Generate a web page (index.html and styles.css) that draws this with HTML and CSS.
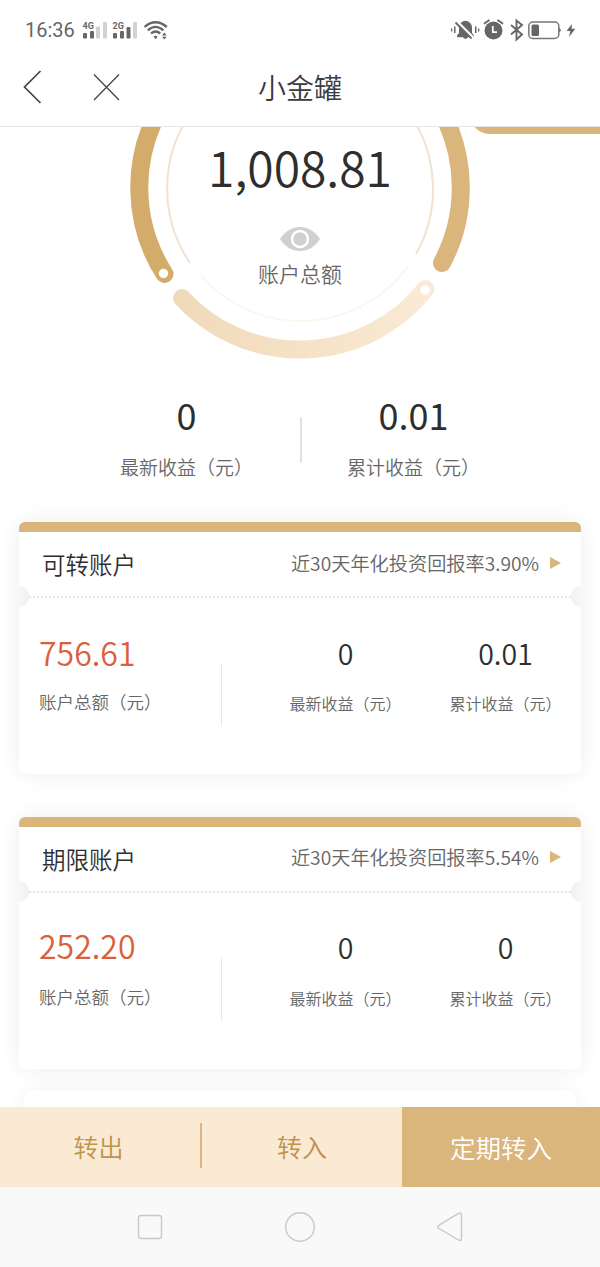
FILE: index.html
```
<!DOCTYPE html>
<html lang="zh-CN">
<head>
  <meta charset="utf-8">
  <title>小金罐</title>
  <link rel="stylesheet" href="styles.css">
</head>
<body>
<div class="page">
  <!-- 状态栏 -->
  <div class="status-bar">
    <span class="time">16:36</span>
    <svg class="signal" width="90" height="24" viewBox="0 0 90 24">
      <g fill="#666">
        <text x="1.5" y="11" class="net">4G</text>
        <rect x="2" y="15" width="4" height="5.5" rx="1"/>
        <rect x="9" y="13" width="4" height="7.5" rx="1"/>
        <text x="31.5" y="11" class="net">2G</text>
        <rect x="32" y="15" width="4" height="5.5" rx="1"/>
        <rect x="39" y="13" width="4" height="7.5" rx="1"/>
        <rect x="45.5" y="9" width="4" height="11.5" rx="1"/>
      </g>
      <g fill="#d2d2d2">
        <rect x="15" y="8.5" width="4" height="12" rx="1"/>
        <rect x="22" y="4" width="4" height="16.5" rx="1"/>
        <rect x="52" y="4" width="4" height="16.5" rx="1"/>
      </g>
      <g fill="none" stroke="#666" stroke-width="2.3">
        <path d="M63.500 9Q74.500 -0.500 85.800 9"/>
        <path d="M66.800 12.300Q74.500 5.500 82.300 12.300"/>
        <path d="M70 15.500Q74.500 11.500 79.200 15.500"/>
      </g>
      <path d="M72.500 18.500Q74.500 17 76.700 18.500L74.500 21.200ZM81 17.500L83.300 14.500L85.700 17.500ZM81 18.800L83.300 21.500L85.700 18.800Z" fill="#666"/>
    </svg>
    <svg class="sys" width="130" height="24" viewBox="0 0 130 24">
      <!-- 静音 -->
      <g fill="#666">
        <path d="M7 19.200V17.500L9 15V9.500C9 6 11.500 3.300 15.500 2.800C19.500 3.300 22 6 22 9.500V15L24 17.500V19.200H18Q15.500 22.800 13 19.200Z"/>
        <rect x="1" y="10.500" width="1.300" height="3"/><rect x="4" y="8.500" width="1.500" height="6.500"/>
        <rect x="25" y="8.500" width="1.500" height="6.500"/><rect x="28" y="10.500" width="1.300" height="3"/>
      </g>
      <path d="M7 3.500L23.500 20" stroke="#fff" stroke-width="2.500"/>
      <path d="M5.500 4.500L21.500 20.500" stroke="#666" stroke-width="1.800"/>
      <!-- 闹钟 -->
      <circle cx="43.500" cy="12.500" r="9" fill="#666"/>
      <path d="M34 5.800L39.500 2M47.500 2L53 5.800" stroke="#666" stroke-width="2"/>
      <path d="M42.800 8V14.200H47" stroke="#fff" stroke-width="1.700" fill="none"/>
      <!-- 蓝牙 -->
      <path d="M61 7L72 16.500L66.500 21.500V2.500L72 7L61 16.500" fill="none" stroke="#666" stroke-width="1.900"/>
      <!-- 电池 -->
      <rect x="78.800" y="4" width="30" height="16.500" rx="4" fill="none" stroke="#777" stroke-width="1.500"/>
      <rect x="81.500" y="6.500" width="7.500" height="11.500" rx="1.500" fill="#666"/>
      <path d="M109.500 10.500L110.500 12.300L109.500 14Z" fill="#777" stroke="#777"/>
      <path d="M122 6L116.500 13H120.300L119 19L125.300 10.800H121.500Z" fill="#666"/>
    </svg>
  </div>

  <!-- 标题栏 -->
  <div class="header">
    <div class="left">
      <svg width="110" height="40" viewBox="0 0 110 40" fill="none" stroke="#444">
        <path d="M25.500 4L9.500 20L25.500 36" stroke-width="1.700"/>
        <path d="M79 7.500L104 33M104 7.500L79 33" stroke-width="1.300"/>
      </svg>
    </div>
    <h1>小金罐</h1>
    <div class="right"></div>
  </div>

  <div class="content">
    <div class="tag"></div>
    <!-- 总额圆环 -->
    <div class="total">
      <svg class="ring" width="360" height="245" viewBox="120 127 360 245" fill="none">
        <defs>
          <linearGradient id="light" x1="174" y1="0" x2="434" y2="0" gradientUnits="userSpaceOnUse">
            <stop offset="0" stop-color="#f0d9b8"/>
            <stop offset="1" stop-color="#faebd6"/>
          </linearGradient>
        </defs>
        <g stroke-width="18" stroke-linecap="round">
          <path d="M161 107A160.500 160.500 0 0 0 164.500 274" stroke="#d3ab6b"/>
          <path d="M439 107A160.500 160.500 0 0 1 442 263" stroke="#dab57c"/>
          <path d="M182 298A160.500 160.500 0 0 0 425.500 289" stroke="url(#light)"/>
        </g>
        <path d="M190 263A133 133 0 0 1 190 114" stroke="#f0e3d0" stroke-width="2"/>
        <path d="M416 254A133 133 0 0 0 410 114" stroke="#f0e3d0" stroke-width="2"/>
        <path d="M201 276A133 133 0 0 0 409 265" stroke="#fcf5ea" stroke-width="1.500"/>
        <circle cx="163.500" cy="273.500" r="4.700" fill="#fff"/>
        <circle cx="425" cy="290" r="4.700" fill="#fff"/>
      </svg>
      <div class="total-text">
        <div class="total-num">1,008.81</div>
        <svg class="eye" width="40" height="24" viewBox="0 0 40 24">
          <path d="M0 12C5 4 12 0 20 0S35 4 40 12C35 20 28 24 20 24S5 20 0 12Z" fill="#d0d0d0"/>
          <circle cx="20" cy="12" r="8" fill="#d0d0d0" stroke="#fff" stroke-width="2.500"/>
        </svg>
        <div class="total-label">账户总额</div>
      </div>
    </div>

    <div class="income">
      <div class="income-item">
        <b>0</b>
        <span>最新收益（元）</span>
      </div>
      <div class="income-line"></div>
      <div class="income-item">
        <b>0.01</b>
        <span>累计收益（元）</span>
      </div>
    </div>

    <div class="card">
      <div class="card-head">
        <h2>可转账户</h2>
        <span class="rate">近30天年化投资回报率3.90%</span>
        <i class="arrow"></i>
      </div>
      <div class="card-body">
        <div class="main">
          <b>756.61</b>
          <span>账户总额（元）</span>
        </div>
        <div class="sub">
          <b>0</b>
          <span>最新收益（元）</span>
        </div>
        <div class="sub">
          <b>0.01</b>
          <span>累计收益（元）</span>
        </div>
      </div>
    </div>

    <div class="card term">
      <div class="card-head">
        <h2>期限账户</h2>
        <span class="rate">近30天年化投资回报率5.54%</span>
        <i class="arrow"></i>
      </div>
      <div class="card-body">
        <div class="main">
          <b>252.20</b>
          <span>账户总额（元）</span>
        </div>
        <div class="sub">
          <b>0</b>
          <span>最新收益（元）</span>
        </div>
        <div class="sub">
          <b>0</b>
          <span>累计收益（元）</span>
        </div>
      </div>
    </div>

    <div class="next-card"></div>
  </div>

  <!-- 底部按钮 -->
  <div class="buttons">
    <a class="btn out">转出</a>
    <a class="btn in">转入</a>
    <a class="btn fixed">定期转入</a>
  </div>

  <!-- 系统导航 -->
  <div class="nav">
    <svg width="330" height="32" viewBox="0 0 330 32" fill="none" stroke="#c8c8c8" stroke-width="1.400">
      <rect x="3.500" y="4.500" width="23" height="23" rx="2.500"/>
      <circle cx="165" cy="16" r="14.300"/>
      <path d="M304 14.200L323.500 2.500Q326.500 1.300 326.500 4V27.500Q326.500 30.500 323.500 29L304 17.500Q301.500 16 304 14.200Z"/>
    </svg>
  </div>
</div>
</body>
</html>
```
FILE: styles.css
```
* {
  box-sizing: border-box;
  margin: 0;
  padding: 0;
}

body {
  background-color: #fff;
  font-family: "Noto Sans CJK SC", sans-serif;
  font-weight: 350;
  color: #2e2e2e;
}

svg {
  display: block;
}

b, h1, h2 {
  font-weight: 350;
}

.page {
  display: flex;
  flex-direction: column;
  width: 600px;
  height: 1267px;
  overflow: hidden;
}

/* 状态栏 */
.status-bar {
  display: flex;
  align-items: center;
  height: 60px;
  padding: 0 20px 0 25px;
}

.time {
  width: 56px;
  font-family: Roboto, sans-serif;
  font-size: 20px;
  font-weight: 400;
  color: #666;
}

.net {
  font: bold 9px Roboto, sans-serif;
}

.signal {
  margin-top: -1px;
}

.sys {
  margin-left: auto;
}

/* 标题栏 */
.header {
  display: flex;
  align-items: center;
  height: 67px;
  padding: 0 15px 13px;
  border-bottom: 1px solid #e6e6e6;
}

.header .left,
.header .right {
  flex: 1;
}

.header h1 {
  font-size: 28px;
  line-height: 40px;
  color: #3a3a42;
}

.content {
  position: relative;
  height: 980px;
  overflow: hidden;
}

.tag {
  position: absolute;
  right: 0;
  top: -33px;
  width: 130px;
  height: 40px;
  background-color: #dab57c;
  border-radius: 22px 0 0 22px;
}

.total {
  position: relative;
  height: 245px;
}

.ring {
  margin: 0 auto;
}

.total-text {
  position: absolute; /* 盖在圆环上 */
  top: 0;
  left: 0;
  width: 100%;
  text-align: center;
}

.total-num {
  height: 100px;
  font-size: 48px;
  line-height: 79px;
}

.eye {
  margin: 0 auto;
}

.total-label {
  margin-top: 7px;
  font-size: 21px;
  line-height: 30px;
  color: #666;
}

.income {
  display: flex;
  justify-content: center;
  height: 150px;
  padding-top: 18px;
}

.income-item {
  width: 227px;
  text-align: center;
}

.income-item b {
  display: block;
  font-size: 36px;
  line-height: 48px;
  font-weight: 400;
}

.income-item span {
  display: block;
  margin-top: 16px;
  font-size: 19px;
  line-height: 26px;
  color: #666;
}

.income-line {
  width: 2px;
  height: 46px;
  margin: 27px -2px 0 0;
  background-color: #e2e2e2;
}

/* 账户卡片 */
.card {
  position: relative;
  width: 562px;
  height: 252px;
  margin: 0 auto 43px;
  border-top: 10px solid #dab57c;
  border-radius: 6px;
  background-color: #fff;
  box-shadow: 0 0 22px rgba(0, 0, 0, 0.07);
}

.card-head {
  display: flex;
  align-items: center;
  height: 66px;
  margin: 0 10px;
  padding: 0 10px 2px 13px;
  border-bottom: 2px dotted #e6e6e6;
}

.card-head h2 {
  flex: 1;
  padding-top: 2px;
  font-size: 23.5px;
}

.rate {
  font-size: 19.2px;
  color: #666;
}

.arrow {
  margin-left: 11px;
  border: 6px solid transparent;
  border-left: 11px solid #dab57c;
  border-right: 0;
}

/* 左右两侧的缺口 */
.card::before,
.card::after {
  content: "";
  position: absolute;
  top: 54px;
  width: 10px;
  height: 21px;
}

.card::before {
  left: 0;
  border-radius: 0 11px 11px 0;
  background: linear-gradient(to right, #f7f7f7, #f0f0f0);
}

.card::after {
  right: 0;
  border-radius: 11px 0 0 11px;
  background: linear-gradient(to left, #f7f7f7, #f0f0f0);
}

.card-body {
  display: flex;
  padding: 33px 0 0 20px;
}

.card-body b,
.card-body span {
  display: block;
}

.card-body span {
  color: #666;
}

.main {
  width: 183px;
  height: 95px;
  background: linear-gradient(#e8e8e8, #e8e8e8) no-repeat right bottom / 1px 63px;
}

.main b {
  font-size: 32px;
  line-height: 42px;
  color: #dc5f3c;
}

.main span {
  margin-top: 17px;
  font-size: 17.5px;
  line-height: 24px;
}

.sub {
  width: 113px;
  margin-left: 67px;
  text-align: center;
}

.sub + .sub {
  margin-left: 47px;
}

.sub b {
  font-size: 28.5px;
  line-height: 44px;
}

.sub span {
  margin-top: 16px;
  font-size: 16px;
  line-height: 24px;
}

.term .rate,
.term .arrow {
  margin-bottom: 2px;
}

.term .main b {
  line-height: 38px;
  margin-bottom: 21px;
}

.term .main span {
  margin-top: 0;
}

.term .sub b {
  line-height: 41px;
}

.term .sub span {
  margin-top: 19px;
}

.next-card {
  width: 552px;
  height: 60px;
  margin: -22px auto 0;
  border-radius: 12px;
  background-color: #fff;
  box-shadow: 0 0 22px rgba(0, 0, 0, 0.06);
}

/* 底部按钮 */
.buttons {
  display: flex;
  height: 80px;
}

.btn {
  width: 201px;
  font-size: 25px;
  line-height: 79px;
  text-align: center;
  color: #be934a;
  background-color: #faead4;
}

.out {
  width: 202px;
  padding-right: 5px;
  background: linear-gradient(#dab57c, #dab57c) no-repeat right 16px / 2px 45px #faead4;
}

.in {
  width: 200px;
}

.fixed {
  flex: 1;
  font-size: 25.5px;
  color: #fff;
  background-color: #dab57c;
}

.nav {
  display: flex;
  justify-content: center;
  align-items: center;
  height: 80px;
  background-color: #f9f9f9;
}
```
